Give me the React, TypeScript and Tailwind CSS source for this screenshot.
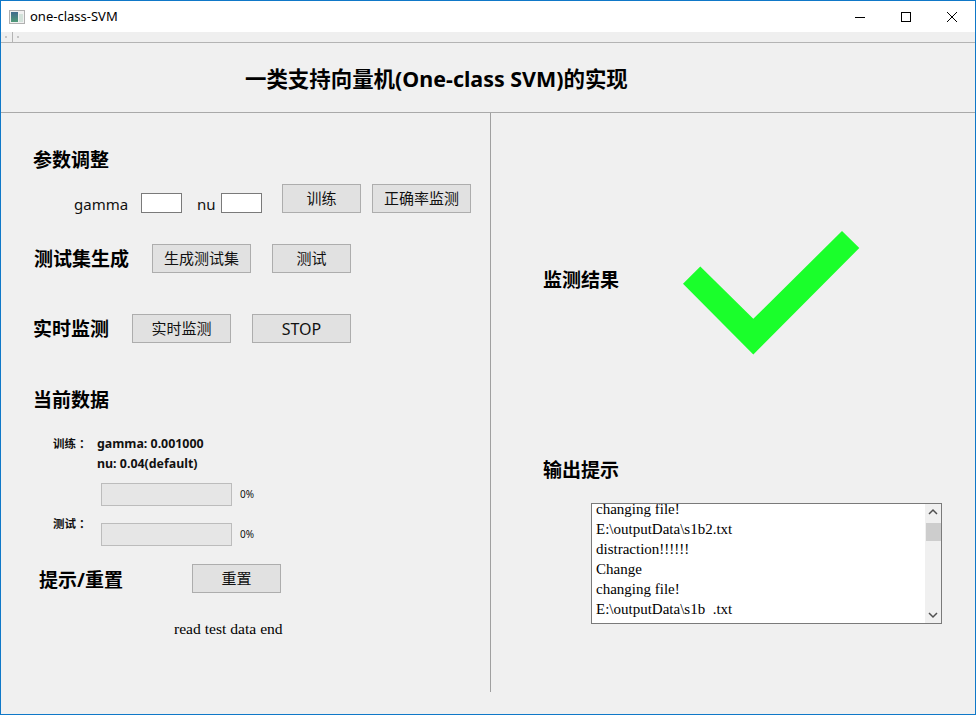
// App.tsx
const CJK = "font-['Noto_Sans','Noto_Sans_CJK_SC',sans-serif]";

function Heading({ children, className = "" }: { children: string; className?: string }) {
  return (
    <h2 className={`text-[19px] leading-[26px] font-bold text-black whitespace-nowrap ${CJK} ${className}`}>
      {children}
    </h2>
  );
}

function Button({ children, className = "" }: { children: string; className?: string }) {
  return (
    <button className={`h-[29px] border border-[#adadad] bg-[#e1e1e1] leading-none text-[#111] ${CJK} ${className}`}>
      {children}
    </button>
  );
}

function Progress() {
  return (
    <div className="flex items-center">
      <div className="h-[23px] w-[131px] border border-[#bcbcbc] bg-[#e6e6e6]" />
      <span className={`ml-2 text-[10px] text-[#111] ${CJK}`}>0%</span>
    </div>
  );
}

const lines = [
  "changing file!",
  "E:\\outputData\\s1b2.txt",
  "distraction!!!!!!",
  "Change",
  "changing file!",
  "E:\\outputData\\s1b\u00a0\u00a0.txt",
];

export default function App() {
  return (
    <div className="flex h-[715px] w-[976px] flex-col overflow-hidden border border-[#0f78c8] bg-[#f0f0f0] font-['Noto_Sans',sans-serif]">
      {/* title bar */}
      <div className="flex h-[31px] shrink-0 items-center bg-white">
        <svg width="16" height="16" viewBox="0 0 16 16" className="ml-[8px]">
          <defs>
            <linearGradient id="appIcon" x1="0" y1="0" x2="0" y2="1">
              <stop offset="0" stopColor="#3f6a8c" />
              <stop offset="1" stopColor="#4f9a78" />
            </linearGradient>
          </defs>
          <rect x="0.5" y="1.5" width="15" height="13" fill="#f1f1f1" stroke="#b0b0b0" />
          <rect x="2" y="3" width="7" height="10" fill="url(#appIcon)" />
          <rect x="10" y="5" width="4" height="8" fill="#d3e2da" />
        </svg>
        <span className="ml-[5px] text-[13px] text-black">one-class-SVM</span>
        <div className="ml-auto flex items-center text-black">
          <svg width="46" height="30" viewBox="0 0 46 30">
            <path d="M18 15.5h10" stroke="#000" fill="none" />
          </svg>
          <svg width="46" height="30" viewBox="0 0 46 30">
            <rect x="18.5" y="10.5" width="9" height="9" stroke="#000" fill="none" />
          </svg>
          <svg width="46" height="30" viewBox="0 0 46 30">
            <path d="M18 10l10 10M28 10l-10 10" stroke="#000" fill="none" />
          </svg>
        </div>
      </div>

      {/* empty menu bar */}
      <div className="flex h-[11px] shrink-0 items-center border-b border-[#b4b4b4] bg-[#efefef]">
        <span className="ml-[4px] h-[2px] w-[2px] bg-[#c4c4c4]" />
        <span className="ml-[5px] h-[10px] w-px bg-[#b4b4b4]" />
        <span className="ml-[4px] h-[2px] w-[2px] bg-[#c4c4c4]" />
      </div>

      {/* page title */}
      <div className="flex h-[70px] shrink-0 items-center border-b border-[#a9a9a9] pl-[244px] pt-[4px]">
        <h1 className={`text-[21.45px] font-bold text-black ${CJK}`}>一类支持向量机(One-class SVM)的实现</h1>
      </div>

      <div className="flex min-h-0 flex-1">
        {/* left column */}
        <div className="w-[489px] shrink-0 pl-[32px] pt-[34px]">
          <Heading>参数调整</Heading>
          <div className="mt-[11px] flex items-end pl-[41px]">
            <span className="w-[67px] text-[15px] leading-[18px] text-[#111]">gamma</span>
            <input className="h-[20px] w-[41px] border border-[#7a7a7a] bg-white" />
            <span className="ml-[15px] w-[24px] text-[15px] leading-[18px] text-[#111]">nu</span>
            <input className="h-[20px] w-[41px] border border-[#7a7a7a] bg-white" />
            <Button className="ml-[20px] w-[79px] text-[15px]">训练</Button>
            <Button className="ml-[11px] w-[99px] text-[15px]">正确率监测</Button>
          </div>

          <div className="mt-[31px] flex items-center pl-[1px]">
            <Heading className="w-[118px]">测试集生成</Heading>
            <Button className="w-[99px] text-[15px]">生成测试集</Button>
            <Button className="ml-[21px] w-[79px] text-[15px]">测试</Button>
          </div>

          <div className="mt-[41px] flex items-center">
            <Heading className="w-[99px]">实时监测</Heading>
            <Button className="w-[99px] text-[15px]">实时监测</Button>
            <Button className="ml-[21px] w-[99px] text-[16px]">STOP</Button>
          </div>

          <Heading className="mt-[44px]">当前数据</Heading>

          <div className="mt-[21px] flex pl-[20px]">
            <span className={`w-[44px] text-[11.5px] leading-[20px] font-bold text-[#111] ${CJK}`}>训练 ：</span>
            <div className={`text-[12.4px] leading-[20px] font-bold text-[#111] ${CJK}`}>
              <div>gamma: 0.001000</div>
              <div>nu: 0.04(default)</div>
            </div>
          </div>

          <div className="mt-[9px] pl-[68px]">
            <Progress />
          </div>
          <div className="mt-[9px] flex">
            <span className={`ml-[20px] w-[48px] pt-[1px] text-[11.5px] leading-[16px] font-bold text-[#111] ${CJK}`}>测试 ：</span>
            <div className="mt-[8px]">
              <Progress />
            </div>
          </div>

          <div className="mt-[18px] flex items-center pl-[6px]">
            <Heading className="w-[153px] pt-[2px]">提示/重置</Heading>
            <Button className="w-[89px] text-[15px]">重置</Button>
          </div>

          <p className="mt-[26px] pl-[141px] font-['Liberation_Serif',serif] text-[15.6px] leading-[20px] text-black">
            read test data end
          </p>
        </div>

        {/* right column */}
        <div className="mb-[22px] flex-1 border-l border-[#a0a0a0] pl-[52px]">
          <div className="mt-[118px] flex h-[124px] items-start">
            <Heading className="mt-[36px] w-[140px]">监测结果</Heading>
            <svg width="177" height="124" viewBox="0 0 177 124">
              <path d="M159 0L176.300 17L70.300 123.500L0 52.800L17.300 35.500L70.300 87.800Z" fill="#1aff2b" />
            </svg>
          </div>
          <Heading className="mt-[102px]">输出提示</Heading>
          <div className="ml-[48px] mt-[20px] flex h-[121px] w-[351px] border border-[#7a7a7a] bg-white">
            <div className="h-full flex-1 overflow-hidden pl-[4px] font-['Liberation_Serif',serif] text-[15px] leading-[20px] text-black">
              <div className="-mt-[5px]">
                {lines.map((line, i) => (
                  <div key={i} className="whitespace-pre">{line}</div>
                ))}
              </div>
            </div>
            <div className="flex w-[16px] flex-col items-center bg-[#f0f0f0]">
              <svg width="16" height="17" viewBox="0 0 16 17">
                <path d="M4 10l4-4 4 4" stroke="#505050" strokeWidth="1.5" fill="none" />
              </svg>
              <div className="mt-[2px] h-[18px] w-[15px] bg-[#cdcdcd]" />
              <svg width="16" height="17" viewBox="0 0 16 17" className="mt-auto">
                <path d="M4 7l4 4 4-4" stroke="#505050" strokeWidth="1.5" fill="none" />
              </svg>
            </div>
          </div>
        </div>
      </div>
    </div>
  );
}
